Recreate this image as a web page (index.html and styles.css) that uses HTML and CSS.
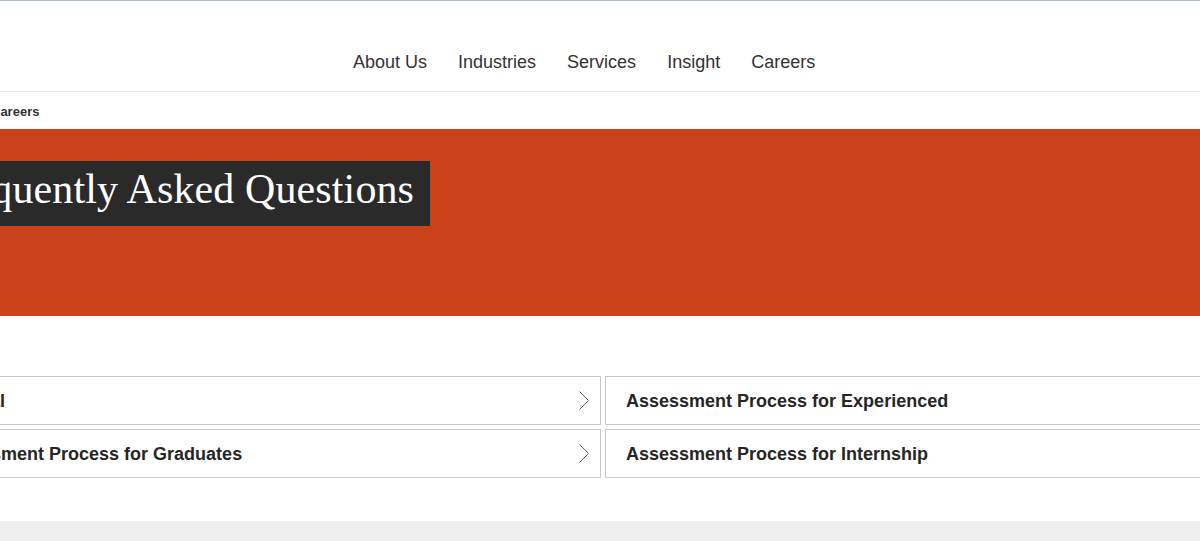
FILE: index.html
```html
<!DOCTYPE html>
<html lang="en">
<head>
<meta charset="utf-8">
<title>Frequently Asked Questions - Careers</title>
<link rel="stylesheet" href="styles.css">
</head>
<body>
<div class="page">
  <header class="header">
    <nav class="nav">
      <a class="nav-link" href="#">About Us</a>
      <a class="nav-link" href="#">Industries</a>
      <a class="nav-link" href="#">Services</a>
      <a class="nav-link" href="#">Insight</a>
      <a class="nav-link" href="#">Careers</a>
    </nav>
  </header>
  <div class="breadcrumb"><span class="crumb">Careers</span></div>
  <section class="hero">
    <h1 class="hero-title">Frequently Asked Questions</h1>
  </section>
  <section class="faq">
    <div class="faq-grid">
      <a class="faq-card" href="#"><span class="faq-text">General</span><svg class="chev" width="10" height="19" viewBox="0 0 10 19"><path d="M0.5 0.5 L9.5 9.5 L0.5 18.5" fill="none" stroke="#666" stroke-width="1"/></svg></a>
      <a class="faq-card" href="#"><span class="faq-text">Assessment Process for Experienced</span><svg class="chev" width="10" height="19" viewBox="0 0 10 19"><path d="M0.5 0.5 L9.5 9.5 L0.5 18.5" fill="none" stroke="#666" stroke-width="1"/></svg></a>
      <a class="faq-card" href="#"><span class="faq-text">Assessment Process for Graduates</span><svg class="chev" width="10" height="19" viewBox="0 0 10 19"><path d="M0.5 0.5 L9.5 9.5 L0.5 18.5" fill="none" stroke="#666" stroke-width="1"/></svg></a>
      <a class="faq-card" href="#"><span class="faq-text">Assessment Process for Internship</span><svg class="chev" width="10" height="19" viewBox="0 0 10 19"><path d="M0.5 0.5 L9.5 9.5 L0.5 18.5" fill="none" stroke="#666" stroke-width="1"/></svg></a>
    </div>
  </section>
  <footer class="footer"></footer>
</div>
</body>
</html>
```
FILE: styles.css
```css
html, body {
  margin: 0;
  padding: 0;
  overflow: hidden;
  background: #ffffff;
}
body {
  font-family: "Liberation Sans", Arial, sans-serif;
  color: #2d2d2d;
}
.page {
  border-top: 1px solid #a9bdd9;
}
.header {
  box-sizing: border-box;
  height: 91px;
  padding-top: 51px;
  border-bottom: 1px solid #ececec;
}
.nav {
  display: flex;
  gap: 31px;
  padding-left: 353px;
}
.nav-link {
  font-size: 18px;
  line-height: 20px;
  color: #333333;
  text-decoration: none;
}
.breadcrumb {
  padding: 10px 0;
  height: 17px;
}
.crumb {
  display: inline-block;
  margin-left: -9px;
  font-size: 13px;
  line-height: 17px;
  font-weight: bold;
  color: #333333;
}
.hero {
  box-sizing: border-box;
  height: 187px;
  background: #c9421a;
  padding-top: 32px;
}
.hero-title {
  display: inline-block;
  margin: 0 0 0 -83px;
  padding: 5px 16px 14px 18px;
  background: #2a2a2a;
  color: #ffffff;
  font-family: "Liberation Serif", "Times New Roman", serif;
  font-weight: normal;
  font-size: 42px;
  line-height: 46px;
  letter-spacing: 0.12px;
}
.faq {
  padding: 60px 0 43px;
}
.faq-grid {
  display: grid;
  grid-template-columns: 684px 684px;
  gap: 4px;
  margin-left: -83px;
  width: 1372px;
}
.faq-card {
  box-sizing: border-box;
  height: 49px;
  border: 1px solid #c9c9c9;
  display: flex;
  align-items: center;
  justify-content: space-between;
  padding: 2px 11px 0 20px;
  text-decoration: none;
  color: #262626;
}
.faq-text {
  font-size: 18px;
  font-weight: bold;
}
.chev {
  display: block;
  flex: none;
  margin-top: -2px;
}
.footer {
  height: 40px;
  background: #efefef;
}
```
